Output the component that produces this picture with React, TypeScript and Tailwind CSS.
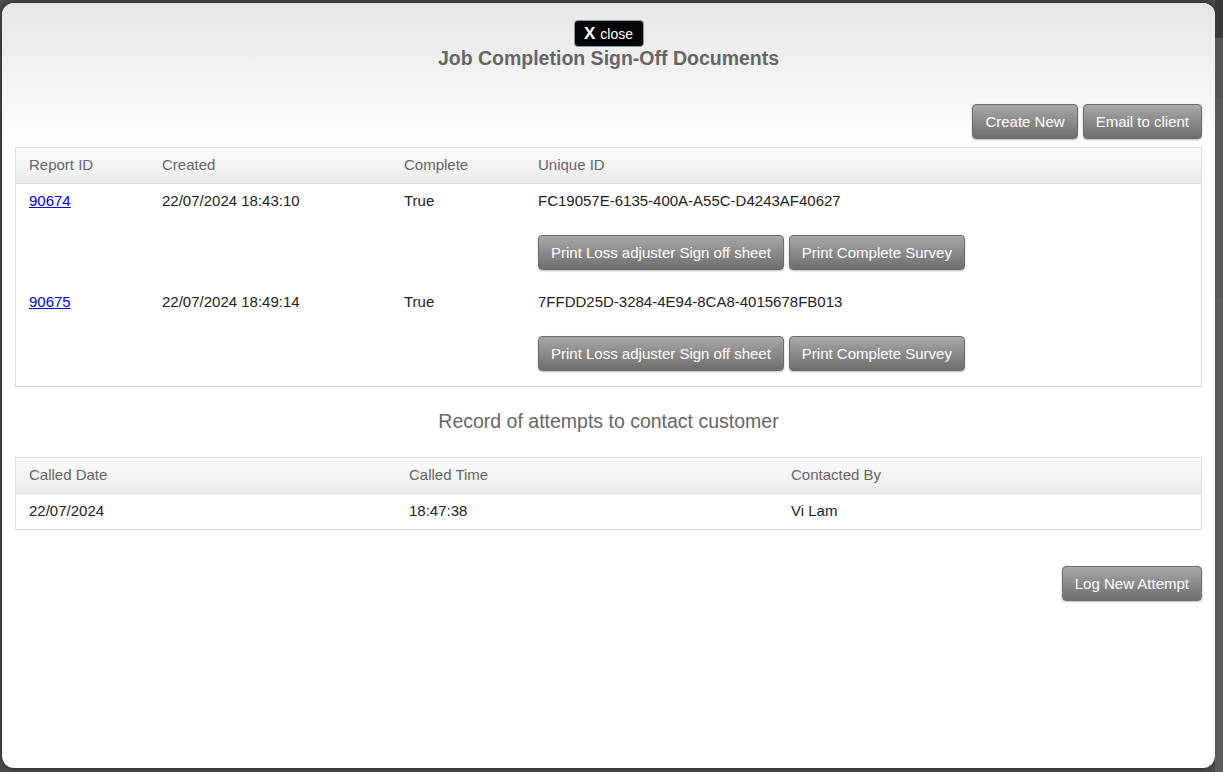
import React from "react";

const font = { fontFamily: '"Liberation Sans", Arial, sans-serif' };

function GrayButton({ children, className = "" }: { children: React.ReactNode; className?: string }) {
  return (
    <button
      className={
        "h-[35px] px-[12px] rounded-[4px] border border-[#6b6b6b] bg-gradient-to-b from-[#a8a8a8] to-[#6e6e6e] text-white text-[15px] leading-none shadow-[0_1px_2px_rgba(0,0,0,0.25)] whitespace-nowrap " +
        className
      }
    >
      {children}
    </button>
  );
}

export default function App() {
  const docs = [
    { id: "90674", created: "22/07/2024 18:43:10", complete: "True", uid: "FC19057E-6135-400A-A55C-D4243AF40627" },
    { id: "90675", created: "22/07/2024 18:49:14", complete: "True", uid: "7FFDD25D-3284-4E94-8CA8-4015678FB013" },
  ];
  return (
    <div className="w-[1223px] h-[772px] bg-[#4d4d4d] overflow-hidden flex" style={font}>
      <div className="ml-[2px] mt-[3px] w-[1213px] h-[765px] rounded-[12px] bg-white shadow-[0_0_6px_rgba(0,0,0,0.6)] overflow-hidden flex flex-col">
        <div className="bg-gradient-to-b from-[#e6e6e6] to-[#ffffff] px-[13px] pb-[8px] flex flex-col">
          <div className="flex justify-center mt-[17px]">
            <div className="w-[70px] h-[27px] rounded-[4px] bg-[#050505] border border-[#8a99a8] flex items-center justify-center gap-[5px] text-white">
              <span className="text-[17px] font-bold leading-none">X</span>
              <span className="text-[14px] leading-none">close</span>
            </div>
          </div>
          <h1 className="text-center text-[19.5px] font-bold text-[#666666] leading-[23px]">
            Job Completion Sign-Off Documents
          </h1>
          <div className="flex justify-end gap-[5px] mt-[34px]">
            <GrayButton>Create New</GrayButton>
            <GrayButton>Email to client</GrayButton>
          </div>
        </div>
        <div className="px-[13px]">
          <div className="border border-[#dddddd]">
            <div className="flex h-[36px] items-center bg-gradient-to-b from-[#fbfbfb] to-[#ececec] border-b border-[#dddddd] text-[15px] text-[#666666]">
              <div className="w-[133px] pl-[13px]">Report ID</div>
              <div className="w-[242px] pl-[13px]">Created</div>
              <div className="w-[134px] pl-[13px]">Complete</div>
              <div className="flex-1 pl-[13px]">Unique ID</div>
            </div>
            {docs.map((d) => (
              <div key={d.id} className="flex h-[101px] text-[15px] text-[#222222] pt-[8px]">
                <div className="w-[133px] pl-[13px] leading-[18px]">
                  <a href="#" className="text-[#0000ee] underline">{d.id}</a>
                </div>
                <div className="w-[242px] pl-[13px] leading-[18px]">{d.created}</div>
                <div className="w-[134px] pl-[13px] leading-[18px]">{d.complete}</div>
                <div className="flex-1 pl-[13px]">
                  <div className="leading-[18px]">{d.uid}</div>
                  <div className="flex gap-[5px] mt-[25px]">
                    <GrayButton>Print Loss adjuster Sign off sheet</GrayButton>
                    <GrayButton>Print Complete Survey</GrayButton>
                  </div>
                </div>
              </div>
            ))}
          </div>
          <h2 className="text-center text-[19.5px] text-[#666666] leading-[23px] mt-[23px]">
            Record of attempts to contact customer
          </h2>
          <div className="border border-[#dddddd] mt-[24px]">
            <div className="flex h-[36px] items-center bg-gradient-to-b from-[#fbfbfb] to-[#ececec] border-b border-[#dddddd] text-[15px] text-[#666666]">
              <div className="w-[380px] pl-[13px]">Called Date</div>
              <div className="w-[382px] pl-[13px]">Called Time</div>
              <div className="flex-1 pl-[13px]">Contacted By</div>
            </div>
            <div className="flex h-[35px] items-center text-[15px] text-[#222222]">
              <div className="w-[380px] pl-[13px]">22/07/2024</div>
              <div className="w-[382px] pl-[13px]">18:47:38</div>
              <div className="flex-1 pl-[13px]">Vi Lam</div>
            </div>
          </div>
          <div className="flex justify-end mt-[36px]">
            <GrayButton>Log New Attempt</GrayButton>
          </div>
        </div>
      </div>
      <div className="flex-1 flex flex-col">
        <div className="h-[38px] bg-[#3a3a3a]" />
        <div className="h-[60px] bg-[#555555]" />
        <div className="h-[200px] bg-[#595959]" />
        <div className="h-[474px] bg-[#5c5c5c]" />
      </div>
    </div>
  );
}
